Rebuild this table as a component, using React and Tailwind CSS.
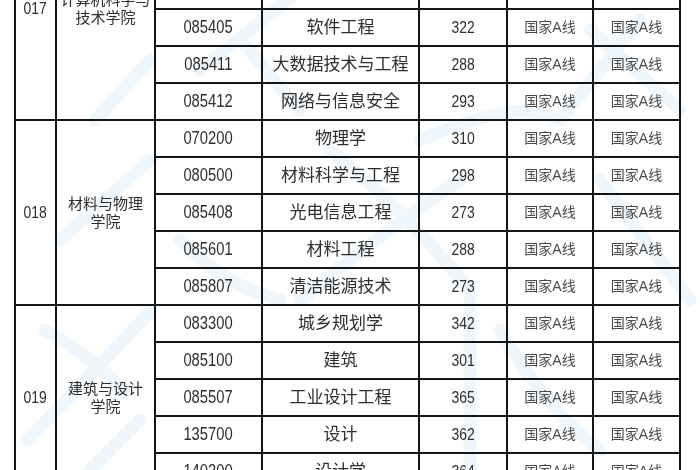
import React from "react";

const groups = [
  {
    code: "017",
    college: ["计算机科学与", "技术学院"],
    rows: [
      ["081200", "计算机科学与技术", "305"],
      ["083500", "软件工程", "300"],
      ["085404", "计算机技术", "320"],
      ["085405", "软件工程", "322"],
      ["085411", "大数据技术与工程", "288"],
      ["085412", "网络与信息安全", "293"],
    ],
  },
  {
    code: "018",
    college: ["材料与物理", "学院"],
    rows: [
      ["070200", "物理学", "310"],
      ["080500", "材料科学与工程", "298"],
      ["085408", "光电信息工程", "273"],
      ["085601", "材料工程", "288"],
      ["085807", "清洁能源技术", "273"],
    ],
  },
  {
    code: "019",
    college: ["建筑与设计", "学院"],
    rows: [
      ["083300", "城乡规划学", "342"],
      ["085100", "建筑", "301"],
      ["085507", "工业设计工程", "365"],
      ["135700", "设计", "362"],
      ["140300", "设计学", "364"],
    ],
  },
];

const spans = { 6: "row-span-6", 5: "row-span-5" };

function Num({ children, size = "text-[18px]" }) {
  return <span className={`inline-block scale-x-[0.82] ${size}`}>{children}</span>;
}

function Cell({ children, className = "" }) {
  return (
    <div className={`bg-white flex items-center justify-center text-center ${className}`}>
      {children}
    </div>
  );
}

// faint blue stamp behind the table
function Watermark() {
  return (
    <svg
      className="absolute inset-0 pointer-events-none mix-blend-multiply"
      width="700"
      height="470"
      viewBox="0 0 700 470"
    >
      <g stroke="#e4f1f9" strokeWidth="13" strokeLinecap="round" fill="none" opacity="0.55">
        <path d="M28 440 L150 312" />
        <path d="M45 330 C70 345 95 360 125 392" />
        <path d="M90 470 L140 420" />
        <path d="M95 120 L150 60" />
        <path d="M200 70 L300 -10" />
        <path d="M240 40 C260 60 280 90 300 110" />
        <path d="M60 240 L150 160" />
        <path d="M330 150 C380 190 420 230 470 290" />
        <path d="M300 300 C350 260 400 220 460 180" />
        <path d="M420 140 C470 120 520 100 560 120" />
        <path d="M470 300 L470 470" />
        <path d="M500 330 C530 380 560 420 600 450" />
        <path d="M590 30 L680 110" />
        <path d="M640 20 L560 120" />
        <path d="M600 180 C630 220 660 260 690 300" />
        <path d="M180 240 C210 270 240 290 280 300" />
      </g>
    </svg>
  );
}

export default function App() {
  return (
    <div
      className="relative w-[700px] h-[470px] overflow-hidden bg-white text-[#2e2e2e]"
      style={{ fontFamily: '"Liberation Sans", "Noto Sans CJK SC", sans-serif' }}
    >
      <div className="ml-[14px] -mt-[103px] w-fit grid grid-cols-[39px_97px_105px_155px_86px_84px_85px] auto-rows-[35px] gap-[2px] p-[2px] bg-[#151515]">
        {groups.map((g) => (
          <React.Fragment key={g.code}>
            <Cell className={spans[g.rows.length]}>
              <Num size="text-[17px]">{g.code}</Num>
            </Cell>
            <Cell className={`${spans[g.rows.length]} flex-col text-[15px] leading-[18px]`}>
              {g.college.map((l) => (
                <span key={l}>{l}</span>
              ))}
            </Cell>
            {g.rows.map((r) => (
              <React.Fragment key={r[0]}>
                <Cell className="col-start-3">
                  <Num>{r[0]}</Num>
                </Cell>
                <Cell className="text-[17px]">{r[1]}</Cell>
                <Cell>
                  <Num size="text-[17px]">{r[2]}</Num>
                </Cell>
                <Cell className="text-[14px] text-[#4a4a4a]">国家A线</Cell>
                <Cell className="text-[14px] text-[#4a4a4a]">国家A线</Cell>
              </React.Fragment>
            ))}
          </React.Fragment>
        ))}
      </div>
      <Watermark />
    </div>
  );
}
